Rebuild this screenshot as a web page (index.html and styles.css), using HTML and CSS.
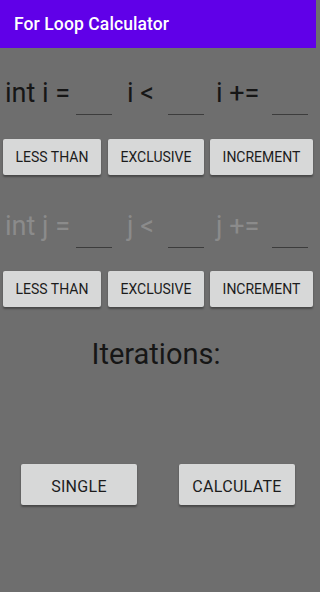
FILE: index.html
```html
<!DOCTYPE html>
<html>
<head>
<meta charset="utf-8">
<link rel="stylesheet" href="styles.css">
</head>
<body>
<div class="app">
  <header class="toolbar">For Loop Calculator</header>
  <main class="content">
    <div class="loop-row row-i">
      <span class="label">int i =</span><span class="blank"></span>
      <span class="label mid">i &lt;</span><span class="blank"></span>
      <span class="label last">i +=</span><span class="blank"></span>
    </div>
    <div class="btn-row row-btn-i">
      <button class="btn b1">LESS THAN</button>
      <button class="btn b2">EXCLUSIVE</button>
      <button class="btn b3">INCREMENT</button>
    </div>
    <div class="loop-row row-j disabled">
      <span class="label">int j =</span><span class="blank"></span>
      <span class="label mid">j &lt;</span><span class="blank"></span>
      <span class="label last">j +=</span><span class="blank"></span>
    </div>
    <div class="btn-row row-btn-j">
      <button class="btn b1">LESS THAN</button>
      <button class="btn b2">EXCLUSIVE</button>
      <button class="btn b3">INCREMENT</button>
    </div>
    <div class="iterations">Iterations:</div>
    <div class="action-row">
      <button class="btn big">SINGLE</button>
      <button class="btn big">CALCULATE</button>
    </div>
  </main>
</div>
</body>
</html>
```

FILE: styles.css
```css
html, body {
  margin: 0;
  padding: 0;
  background: #6e6e6e;
  font-family: Roboto, "Noto Sans", sans-serif;
}

.app {
  width: 316px;
  height: 592px;
  background: #6e6e6e;
  overflow: hidden;
}

.toolbar {
  height: 48px;
  box-sizing: border-box;
  background: #6000e8;
  color: #ffffff;
  font-size: 17.5px;
  font-weight: 500;
  line-height: 48px;
  padding-left: 14px;
  letter-spacing: 0.1px;
}

.content {
  display: flex;
  flex-direction: column;
}

.loop-row {
  display: grid;
  grid-template-columns: 71px 36px 56px 36px 68px 36px;
  align-items: start;
  padding-left: 5px;
  font-size: 27px;
  line-height: 32px;
  color: #161616;
}

.loop-row .label {
  white-space: nowrap;
}

.loop-row .mid {
  padding-left: 15px;
}

.loop-row .last {
  padding-left: 12px;
}

.blank {
  height: 38px;
  box-sizing: border-box;
  border-bottom: 1px solid #3c3c3c;
}

.row-i {
  margin-top: 29px;
}

.row-j {
  margin-top: 35px;
}

.disabled {
  color: #8b8b8b;
}

.btn-row {
  display: flex;
  padding-left: 3px;
}

.row-btn-i {
  margin-top: 24px;
}

.row-btn-j {
  margin-top: 23px;
}

.btn {
  border: none;
  border-radius: 2px;
  background: #d7d8d8;
  color: #1c1c1c;
  font-family: Roboto, "Noto Sans", sans-serif;
  font-weight: 400;
  padding: 0;
  box-shadow: 0 1.5px 2px rgba(0, 0, 0, 0.35);
}

.btn-row .btn {
  height: 36px;
  font-size: 14px;
  letter-spacing: 0;
}

.btn-row .b1 {
  width: 98px;
}

.btn-row .b2 {
  width: 96px;
  margin-left: 7px;
}

.btn-row .b3 {
  width: 103px;
  margin-left: 6px;
}

.iterations {
  margin-top: 30px;
  font-size: 29px;
  line-height: 34px;
  color: #161616;
  text-align: center;
  padding-right: 4px;
}

.action-row {
  display: flex;
  justify-content: space-between;
  padding: 0 21px;
  margin-top: 93px;
}

.btn.big {
  width: 116px;
  height: 41px;
  font-size: 16px;
  letter-spacing: 0.3px;
  padding-top: 3px;
}
```
